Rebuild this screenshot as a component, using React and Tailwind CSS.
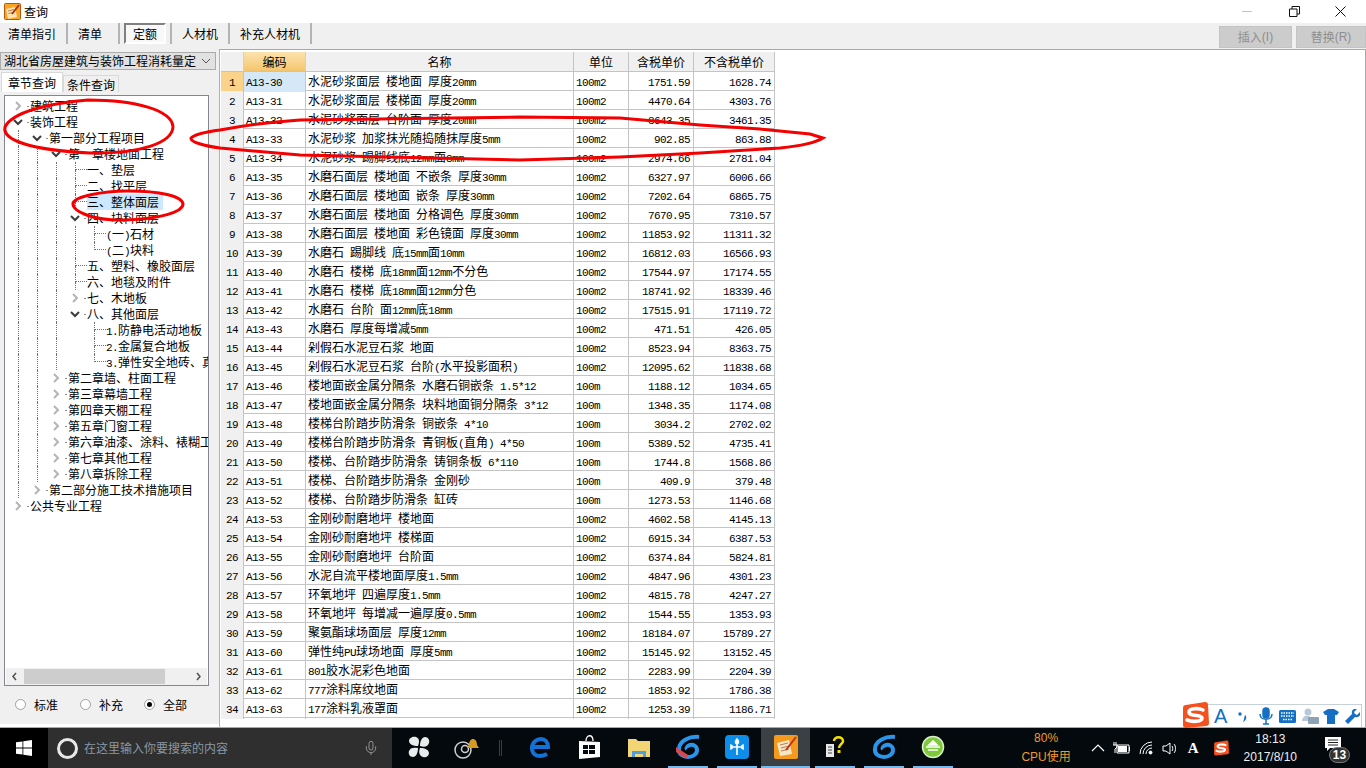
import React from 'react';
import { Mic } from 'lucide-react';

const cjk = "font-['Noto_Sans_CJK_SC',sans-serif]";

// SimSun-like text: latin runs are half the width of the CJK chars
const T = ({ children }) =>
  String(children)
    .split(/([\x20-\x7e]+)/)
    .filter(Boolean)
    .map((part, i) =>
      /^[\x20-\x7e]+$/.test(part) ? (
        <span key={i} className="font-['Liberation_Mono',monospace] text-[11px] tracking-[-0.6px] whitespace-pre">
          {part}
        </span>
      ) : (
        <span key={i}>{part}</span>
      )
    );

const rows = [
  ['A13-30', '水泥砂浆面层 楼地面 厚度20mm', '100m2', '1751.59', '1628.74'],
  ['A13-31', '水泥砂浆面层 楼梯面 厚度20mm', '100m2', '4470.64', '4303.76'],
  ['A13-32', '水泥砂浆面层 台阶面 厚度20mm', '100m2', '3643.35', '3461.35'],
  ['A13-33', '水泥砂浆 加浆抹光随捣随抹厚度5mm', '100m2', '902.85', '863.88'],
  ['A13-34', '水泥砂浆 踢脚线底12mm面8mm', '100m2', '2974.66', '2781.04'],
  ['A13-35', '水磨石面层 楼地面 不嵌条 厚度30mm', '100m2', '6327.97', '6006.66'],
  ['A13-36', '水磨石面层 楼地面 嵌条 厚度30mm', '100m2', '7202.64', '6865.75'],
  ['A13-37', '水磨石面层 楼地面 分格调色 厚度30mm', '100m2', '7670.95', '7310.57'],
  ['A13-38', '水磨石面层 楼地面 彩色镜面 厚度30mm', '100m2', '11853.92', '11311.32'],
  ['A13-39', '水磨石 踢脚线 底15mm面10mm', '100m2', '16812.03', '16566.93'],
  ['A13-40', '水磨石 楼梯 底18mm面12mm不分色', '100m2', '17544.97', '17174.55'],
  ['A13-41', '水磨石 楼梯 底18mm面12mm分色', '100m2', '18741.92', '18339.46'],
  ['A13-42', '水磨石 台阶 面12mm底18mm', '100m2', '17515.91', '17119.72'],
  ['A13-43', '水磨石 厚度每增减5mm', '100m2', '471.51', '426.05'],
  ['A13-44', '剁假石水泥豆石浆 地面', '100m2', '8523.94', '8363.75'],
  ['A13-45', '剁假石水泥豆石浆 台阶(水平投影面积)', '100m2', '12095.62', '11838.68'],
  ['A13-46', '楼地面嵌金属分隔条 水磨石铜嵌条 1.5*12', '100m', '1188.12', '1034.65'],
  ['A13-47', '楼地面嵌金属分隔条 块料地面铜分隔条 3*12', '100m', '1348.35', '1174.08'],
  ['A13-48', '楼梯台阶踏步防滑条 铜嵌条 4*10', '100m', '3034.2', '2702.02'],
  ['A13-49', '楼梯台阶踏步防滑条 青铜板(直角) 4*50', '100m', '5389.52', '4735.41'],
  ['A13-50', '楼梯、台阶踏步防滑条 铸铜条板 6*110', '100m', '1744.8', '1568.86'],
  ['A13-51', '楼梯、台阶踏步防滑条 金刚砂', '100m', '409.9', '379.48'],
  ['A13-52', '楼梯、台阶踏步防滑条 缸砖', '100m', '1273.53', '1146.68'],
  ['A13-53', '金刚砂耐磨地坪 楼地面', '100m2', '4602.58', '4145.13'],
  ['A13-54', '金刚砂耐磨地坪 楼梯面', '100m2', '6915.34', '6387.53'],
  ['A13-55', '金刚砂耐磨地坪 台阶面', '100m2', '6374.84', '5824.81'],
  ['A13-56', '水泥自流平楼地面厚度1.5mm', '100m2', '4847.96', '4301.23'],
  ['A13-57', '环氧地坪 四遍厚度1.5mm', '100m2', '4815.78', '4247.27'],
  ['A13-58', '环氧地坪 每增减一遍厚度0.5mm', '100m2', '1544.55', '1353.93'],
  ['A13-59', '聚氨酯球场面层 厚度12mm', '100m2', '18184.07', '15789.27'],
  ['A13-60', '弹性纯PU球场地面 厚度5mm', '100m2', '15145.92', '13152.45'],
  ['A13-61', '801胶水泥彩色地面', '100m2', '2283.99', '2204.39'],
  ['A13-62', '777涂料席纹地面', '100m2', '1853.92', '1786.38'],
  ['A13-63', '177涂料乳液罩面', '100m2', '1253.39', '1186.71'],
];

// [text, level, state, guides]
const tree = [
  ['建筑工程', 0, 'closed', []],
  ['装饰工程', 0, 'open', []],
  ['第一部分工程项目', 1, 'open', [0]],
  ['第一章楼地面工程', 2, 'open', [0, 1]],
  ['一、垫层', 3, 'leaf', [0, 1, 2]],
  ['二、找平层', 3, 'leaf', [0, 1, 2]],
  ['三、整体面层', 3, 'leaf', [0, 1, 2]],
  ['四、块料面层', 3, 'open', [0, 1, 2]],
  ['(一)石材', 4, 'leaf', [0, 1, 2, 3]],
  ['(二)块料', 4, 'last', [0, 1, 2, 3]],
  ['五、塑料、橡胶面层', 3, 'leaf', [0, 1, 2]],
  ['六、地毯及附件', 3, 'leaf', [0, 1, 2]],
  ['七、木地板', 3, 'closed', [0, 1, 2]],
  ['八、其他面层', 3, 'open', [0, 1, 2]],
  ['1.防静电活动地板', 4, 'leaf', [0, 1, 2]],
  ['2.金属复合地板', 4, 'leaf', [0, 1, 2]],
  ['3.弹性安全地砖、真空', 4, 'last', [0, 1, 2]],
  ['第二章墙、柱面工程', 2, 'closed', [0, 1]],
  ['第三章幕墙工程', 2, 'closed', [0, 1]],
  ['第四章天棚工程', 2, 'closed', [0, 1]],
  ['第五章门窗工程', 2, 'closed', [0, 1]],
  ['第六章油漆、涂料、裱糊工程', 2, 'closed', [0, 1]],
  ['第七章其他工程', 2, 'closed', [0, 1]],
  ['第八章拆除工程', 2, 'closed', [0, 1]],
  ['第二部分施工技术措施项目', 1, 'closed', [0]],
  ['公共专业工程', 0, 'closed', []],
];

const Chevron = ({ open }) => (
  <svg width="12" height="12" viewBox="0 0 12 12" className="shrink-0" fill="none">
    {open ? (
      <path d="M2 4l4 4 4-4" stroke="#3c3c3c" strokeWidth="2" />
    ) : (
      <path d="M4 2l4 4-4 4" stroke="#b4b4b4" strokeWidth="2" />
    )}
  </svg>
);

const TreeRow = ({ text, level, state, guides }) => (
  <div className="flex h-4 items-stretch whitespace-nowrap">
    {Array.from({ length: level }).map((_, i) => (
      <div key={i} className="ml-[6px] w-[13px] shrink-0">
        {guides.includes(i) && <div className="h-full w-px border-l border-dotted border-[#707070]" />}
      </div>
    ))}
    {state === 'open' || state === 'closed' ? (
      <div className="flex w-[18px] shrink-0 items-center justify-between">
        <Chevron open={state === 'open'} />
        <div className="mr-[1px] h-px w-[2px] bg-[#909090]" />
      </div>
    ) : (
      <div className="ml-[6px] w-[12px] shrink-0">
        <div className="h-2 border-b border-l border-dotted border-[#707070]" />
        {state === 'leaf' && <div className="h-2 border-l border-dotted border-[#707070]" />}
      </div>
    )}
    <span className={text === '三、整体面层' ? 'bg-[#cce8ff] pr-[4px] leading-4' : 'leading-4'}>
      <T>{text}</T>
    </span>
  </div>
);

const Radio = ({ label, checked }) => (
  <div className="flex items-center gap-[8px]">
    <div className="flex h-[11px] w-[11px] items-center justify-center rounded-full border border-[#a0a0a0] bg-white">
      {checked && <div className="h-[5px] w-[5px] rounded-full bg-black" />}
    </div>
    <span>{label}</span>
  </div>
);

const ToolSep = () => <div className="h-[21px] w-[2px] bg-[#b4b4b4]" />;

const LogoS = ({ size = 24 }) => (
  <svg width={size} height={size} viewBox="0 0 28 28" className="shrink-0">
    <path d="M5 4L24 1c2 0 3 1 3 3l1 18c0 2-1 3-3 3L5 27c-2 0-3-1-3-3L2 7c0-2 1-3 3-3z" fill="#f4511e" />
    <path d="M22 9c-4-2-14-2-14 2 0 5 13 2 13 6 0 4-10 4-15 2" fill="none" stroke="#fff" strokeWidth="3.6" strokeLinecap="round" />
  </svg>
);

const Swirl = ({ color = '#2b95ea', badge }) => (
  <svg width="26" height="26" viewBox="0 0 26 26" fill="none">
    <path d="M24 3C14 2 5 7 4 14c-1 6 4 9 9 9s9-3 9-7-4-6-7-5-4 3-3 4" stroke={color} strokeWidth="4" />
    {badge && <path d="M1 13l12 8-2 4L1 18z" fill="#d8484f" />}
  </svg>
);

const TaskIcon = ({ children, active, line = true }) => (
  <div className={`flex h-10 w-[49px] shrink-0 flex-col items-center ${active ? 'bg-[#3a4044]' : ''}`}>
    <div className="flex h-[38px] w-full items-center justify-center">{children}</div>
    {line && <div className={`h-[2px] ${active ? 'w-full' : 'w-[40px]'} bg-[#76b9ed]`} />}
  </div>
);

const App = () => (
  <div className={`relative flex h-[768px] w-[1366px] flex-col overflow-hidden bg-white text-[12px] text-black ${cjk}`}>
    {/* title bar */}
    <div className="flex h-[23px] shrink-0 items-center">
      <svg width="17" height="17" viewBox="0 0 17 17" className="ml-[4px]">
        <rect x="0.5" y="0.5" width="16" height="16" rx="1" fill="#f6a623" stroke="#b8560f" />
        <path d="M2 6l9-2 2 10-9 2z" fill="#fbe3b4" />
        <path d="M4 8l6-1.5M4.5 10.5l6-1.5" stroke="#b08050" />
        <path d="M8 11L15 2" stroke="#b02a10" strokeWidth="1.8" />
      </svg>
      <span className="ml-[3px]">查询</span>
      <div className="ml-auto flex items-center">
        <div className="mr-[37px] h-px w-[10px] bg-[#c4c4c4]" />
        <svg width="11" height="11" viewBox="0 0 11 11" fill="none" stroke="#111" className="mr-[35px]">
          <path d="M0.5 3h7.5v7.5H0.5zM3 3V0.5h7.5V8H8" />
        </svg>
        <svg width="11" height="11" viewBox="0 0 11 11" fill="none" stroke="#111" className="mr-[20px]">
          <path d="M0.5 0.5l10 10M10.5 0.5l-10 10" />
        </svg>
      </div>
    </div>

    {/* toolbar */}
    <div className="flex h-[26px] shrink-0 items-center bg-[#f0f0f0] pb-[5px]">
      <span className="ml-[8px] w-[58px]">清单指引</span>
      <ToolSep />
      <span className="ml-[10px] w-[40px]">清单</span>
      <ToolSep />
      <div className="ml-[4px] mr-[4px] flex h-[21px] w-[42px] items-center justify-center border-2 border-b-white border-r-white border-l-[#808080] border-t-[#808080] bg-[#f8f8f8]">
        定额
      </div>
      <ToolSep />
      <span className="ml-[10px] w-[46px]">人材机</span>
      <ToolSep />
      <span className="ml-[10px] w-[70px]">补充人材机</span>
      <ToolSep />
      <div className="mb-[-4px] ml-auto flex items-center gap-[4px] self-end text-[#8e8e8e]">
        <div className="flex h-[22px] w-[73px] items-center justify-center border border-[#c4c4c4] bg-[#cccccc]">
          插入<span className="font-['Liberation_Sans',sans-serif]">(I)</span>
        </div>
        <div className="flex h-[22px] w-[70px] items-center justify-center border border-[#c4c4c4] bg-[#cccccc]">
          替换<span className="font-['Liberation_Sans',sans-serif]">(R)</span>
        </div>
      </div>
    </div>

    {/* content */}
    <div className="flex min-h-0 flex-1 border-b border-[#a8a8a8]">
      <div className="flex w-[220px] shrink-0 flex-col border-r border-[#b0b0b0] pb-[3px]">
        <div className="flex flex-1 flex-col bg-[#f0f0f0]">
          <div className="mt-[3px] flex h-[18px] w-[216px] shrink-0 items-center justify-between border border-[#acacac] bg-[#e1e1e1] pl-[3px] pr-[4px] whitespace-nowrap">
            <span>湖北省房屋建筑与装饰工程消耗量定</span>
            <svg width="10" height="6" viewBox="0 0 10 6" fill="none" stroke="#555" strokeWidth="1">
              <path d="M1 1l4 4 4-4" />
            </svg>
          </div>
          <div className="mt-[2px] flex h-[20px] w-[213px] shrink-0 items-end">
            <div className="ml-[1px] flex h-[20px] w-[62px] items-center justify-center border border-b-0 border-[#d9d9d9] bg-white">章节查询</div>
            <div className="flex h-[17px] w-[56px] items-center justify-center border border-b-0 border-[#d9d9d9] bg-[#f0f0f0] pt-[2px]">条件查询</div>
          </div>
          <div className="flex w-[213px] flex-1 flex-col px-[4px] pt-[3px]">
            <div className="flex h-[591px] shrink-0 flex-col overflow-hidden border border-[#828790] bg-white pt-[2px]">
              <div className="flex-1 overflow-hidden pl-[7px]">
                {tree.map(([text, level, state, guides]) => (
                  <TreeRow key={text} text={text} level={level} state={state} guides={guides} />
                ))}
              </div>
              <div className="mx-px flex h-[17px] shrink-0 items-center bg-[#f0f0f0]">
                <svg width="18" height="17" viewBox="0 0 18 17" fill="none" stroke="#505050" strokeWidth="1.5" className="shrink-0">
                  <path d="M10 5L7 8.5l3 3.5" />
                </svg>
                <div className="h-[15px] w-[141px] bg-[#cdcdcd]" />
                <svg width="18" height="17" viewBox="0 0 18 17" fill="none" stroke="#505050" strokeWidth="1.5" className="ml-auto shrink-0">
                  <path d="M8 5l3 3.5L8 12" />
                </svg>
              </div>
            </div>
            <div className="flex flex-1 items-center pb-[1px] pl-[11px]">
              <div className="w-[65px]"><Radio label="标准" /></div>
              <div className="w-[64px]"><Radio label="补充" /></div>
              <Radio label="全部" checked />
            </div>
          </div>
        </div>
      </div>

      <div className="min-w-0 flex-1 border-r border-t border-[#a8a8b0] pl-[1px] pt-[2px]">
        <div className="w-[554px]">
          <div className="grid h-[20px] grid-cols-[23px_62px_268px_55px_65px_81px] border-b border-[#c4c4c4] bg-[#f0f0f0] text-center leading-[19px]">
            <div className="border-r border-[#d0d0d0]" />
            <div className="border-r border-[#d0d0d0] bg-gradient-to-b from-[#fbe3ad] to-[#f5c56c]">编码</div>
            <div className="border-r border-[#c4c4c4]">名称</div>
            <div className="border-r border-[#c4c4c4]">单位</div>
            <div className="border-r border-[#c4c4c4]">含税单价</div>
            <div className="border-r border-[#c4c4c4]">不含税单价</div>
          </div>
          {rows.map((r, i) => (
            <div key={r[0]} className="grid h-[19px] grid-cols-[23px_62px_268px_55px_65px_81px] border-b border-[#c4c4c4] leading-[18px] whitespace-nowrap">
              <div className={`border-r border-[#c4c4c4] text-center ${i === 0 ? 'bg-[#fad28a]' : 'bg-[#f0f0f0]'}`}><T>{i + 1}</T></div>
              <div className={`border-r border-[#c4c4c4] pl-[2px] ${i === 0 ? 'bg-[#d5e8f8]' : ''}`}><T>{r[0]}</T></div>
              <div className="overflow-hidden border-r border-[#c4c4c4] pl-[2px]"><T>{r[1]}</T></div>
              <div className="border-r border-[#c4c4c4] pl-[2px]"><T>{r[2]}</T></div>
              <div className="border-r border-[#c4c4c4] pr-[3px] text-right"><T>{r[3]}</T></div>
              <div className="border-r border-[#c4c4c4] pr-[3px] text-right"><T>{r[4]}</T></div>
            </div>
          ))}
        </div>
      </div>
    </div>

    {/* taskbar */}
    <div className="flex h-10 shrink-0 items-center bg-[#04090d] text-white">
      <div className="flex h-10 w-[48px] shrink-0 items-center justify-center bg-black">
        <svg width="16" height="16" viewBox="0 0 16 16" fill="#fff">
          <path d="M0 2.3l6.5-.9v6.2H0zM7.3 1.3L16 0v7.6H7.3zM0 8.4h6.5v6.2L0 13.7zM7.3 8.4H16V16l-8.7-1.2z" />
        </svg>
      </div>
      <div className="flex h-10 w-[344px] shrink-0 items-center bg-[#2f2f2f] pl-[9px] pr-[13px]">
        <div className="h-[21px] w-[21px] rounded-full border-[3px] border-[#e8e8e8]" />
        <span className="ml-[6px] text-[#8a98a4]">在这里输入你要搜索的内容</span>
        <Mic size={16} strokeWidth={1.3} className="ml-auto text-[#a0a0a0]" />
      </div>
      <div className="flex h-10 items-center pl-[2px]">
        <TaskIcon line={false}>
          <svg width="22" height="22" viewBox="0 0 22 22" fill="#e8ecec">
            <path d="M10 10C5 10 1 8 1 5s4-5 7-4 4 4 2 9zM12 10c0-5 2-9 5-9s5 3 4 6-4 5-9 3zM12 12c5 0 9 2 9 5s-3 5-6 4-5-4-3-9zM10 12c0 5-2 9-5 9s-5-3-4-6 4-4 9-3z" />
          </svg>
        </TaskIcon>
        <TaskIcon line={false}>
          <svg width="32" height="26" viewBox="0 0 32 26" fill="none">
            <circle cx="11" cy="16" r="8" stroke="#cfcfcf" strokeWidth="1.5" />
            <circle cx="13" cy="15" r="3.5" stroke="#cfcfcf" strokeWidth="1.5" />
            <path d="M17 11c0-4 2-6 4-6s4 2 4 6l2 3H15z" fill="#d69a1f" />
          </svg>
        </TaskIcon>
        <div className="ml-[7px] mr-[14px] h-4 w-[3px] border-x border-[#3c3c3c]" />
        <TaskIcon line={false}>
          <svg width="21" height="22" viewBox="0 0 21 22" fill="none">
            <path d="M3 11h15c0-5-3-8-7-8s-9 3-9 9 4 8 8 8c3 0 5-1 7-2" stroke="#1272d8" strokeWidth="4" />
          </svg>
        </TaskIcon>
        <TaskIcon line={false}>
          <svg width="21" height="24" viewBox="0 0 21 24">
            <path d="M0 6l21 1v15L0 24z" fill="#fff" />
            <path d="M7 6c0-7 7-7 7 0" fill="none" stroke="#fff" strokeWidth="1.3" />
            <path d="M4 10h5v4H4zM10 10h6v4h-6zM4 15h5v4H4zM10 15h6v4h-6z" fill="#04090d" />
          </svg>
        </TaskIcon>
        <TaskIcon line={false}>
          <svg width="22" height="20" viewBox="0 0 22 20">
            <path d="M0 2h8l2 2h12v16H0z" fill="#f2d675" />
            <path d="M4 14h14v6h-3v-3H7v3H4z" fill="#4f9fe0" />
          </svg>
        </TaskIcon>
        <TaskIcon><Swirl badge /></TaskIcon>
        <TaskIcon>
          <svg width="24" height="24" viewBox="0 0 24 24" fill="none">
            <rect width="24" height="24" rx="4" fill="#0c8ee8" />
            <path d="M12 4v16M5 12h14M12 4c-2 2-2 4 0 5 2-1 2-3 0-5zM5 10c3 0 3 4 0 4M19 10c-3 0-3 4 0 4" stroke="#fff" strokeWidth="1.6" />
          </svg>
        </TaskIcon>
        <TaskIcon active>
          <svg width="24" height="24" viewBox="0 0 24 24">
            <rect width="24" height="24" rx="2" fill="#f59a1c" />
            <path d="M3 8l12-3 3 14-12 2z" fill="#f5e6c8" />
            <path d="M6 10l8-2M7 13l8-2M7 16l8-2" stroke="#b08050" />
            <path d="M12 15L22 2" stroke="#c4301a" strokeWidth="2" />
          </svg>
        </TaskIcon>
        <TaskIcon>
          <svg width="20" height="22" viewBox="0 0 20 22">
            <path d="M1 8h8v13H1z" fill="#e8e8e8" />
            <path d="M3 11h4M3 14h4M3 17h4" stroke="#444" />
            <path d="M9 5c0-5 9-5 9 0 0 3-4 3-4 7" fill="none" stroke="#f5e000" strokeWidth="2.5" />
            <rect x="12.5" y="14" width="3" height="3" fill="#f5e000" />
          </svg>
        </TaskIcon>
        <TaskIcon><Swirl /></TaskIcon>
        <TaskIcon>
          <svg width="24" height="24" viewBox="0 0 24 24">
            <circle cx="12" cy="12" r="10.5" fill="#7ec83c" stroke="#d8efc8" strokeWidth="1.5" />
            <path d="M5 12h14M12 6l-4 4h8zM7 15h10" stroke="#fff" strokeWidth="1.6" fill="#fff" />
          </svg>
        </TaskIcon>
      </div>
      <div className="ml-auto flex h-10 items-center">
        <div className="mr-[20px] flex flex-col items-center leading-[17px] text-[#ef9a26]">
          <span className="font-['Liberation_Sans',sans-serif]">80%</span>
          <span><span className="font-['Liberation_Sans',sans-serif]">CPU</span>使用</span>
        </div>
        <svg width="14" height="8" viewBox="0 0 14 8" fill="none" stroke="#fff" strokeWidth="1.2" className="mr-[7px]">
          <path d="M1 7l6-6 6 6" />
        </svg>
        <svg width="18" height="12" viewBox="0 0 18 12" className="mr-[9px]">
          <path d="M5 3h12v8H5z" fill="none" stroke="#fff" />
          <path d="M6 4h9v6H6zM17 5h1v4h-1z" fill="#fff" />
          <path d="M2 0v3M4 0v3M1 3h4v2L3 7v4" fill="none" stroke="#fff" />
        </svg>
        <svg width="14" height="14" viewBox="0 0 14 14" fill="none" stroke="#fff" className="mr-[9px]">
          <path d="M1 13A12 12 0 0 1 13 1M4 13a9 9 0 0 1 9-9" />
          <path d="M7 13a6 6 0 0 1 6-6" />
          <circle cx="11.5" cy="11.5" r="1.5" fill="#fff" />
        </svg>
        <svg width="15" height="13" viewBox="0 0 15 13" fill="none" stroke="#fff" className="mr-[11px]">
          <path d="M1 4h3l4-3v11l-4-3H1zM10 4c1 1 1 4 0 5M12 2c2 2 2 7 0 9" />
        </svg>
        <span className="mr-[14px] font-['Liberation_Serif',serif] text-[15px] font-bold">A</span>
        <div className="mr-[15px]"><LogoS size={16} /></div>
        <div className="mr-[23px] flex flex-col items-center leading-[18px] font-['Liberation_Sans',sans-serif] text-[#f0f0f0]">
          <span>18:13</span>
          <span>2017/8/10</span>
        </div>
        <div className="relative mr-[22px] flex h-10 w-[24px] items-center">
          <svg width="16" height="14" viewBox="0 0 16 14" className="mb-[8px] ml-[5px]">
            <path d="M0 0h16v11H5l-3 3v-3H0z" fill="#fff" />
            <path d="M3 3h10M3 5.5h10M3 8h10" stroke="#222" />
          </svg>
          <div className="absolute left-[9px] top-[19px] flex h-[16px] w-[21px] items-center justify-center rounded-full border border-[#777] bg-[#333] text-[12px] font-bold font-['Liberation_Sans',sans-serif]">13</div>
        </div>
      </div>
    </div>

    {/* floating IME bar */}
    <div className="absolute bottom-[41px] right-[4px] flex h-[23px] w-[172px] items-center border-r border-t border-[#c8d0d8] bg-white pl-[24px] text-[#1570c4]">
      <span className="w-[22px] font-['Liberation_Sans',sans-serif] text-[20px] leading-none">A</span>
      <svg width="16" height="16" viewBox="0 0 16 16" fill="#1570c4" className="mr-[6px]">
        <circle cx="4" cy="6" r="1.7" />
        <path d="M9 7c2 1 2 5-2 7 1-2 1-4 2-7z" />
      </svg>
      <svg width="16" height="18" viewBox="0 0 16 18" fill="none" stroke="#1570c4" strokeWidth="1.5" className="mr-[5px]">
        <rect x="5" y="1" width="6" height="10" rx="3" fill="#1570c4" />
        <path d="M2 7c0 7 12 7 12 0M8 13v4M5 17h6" />
      </svg>
      <svg width="17" height="13" viewBox="0 0 17 13" className="mr-[5px]">
        <rect width="17" height="13" rx="1.5" fill="#1570c4" />
        <path d="M2 3h13M2 6h13M4 9.5h9" stroke="#fff" strokeWidth="1.3" strokeDasharray="1.5 1" />
      </svg>
      <svg width="18" height="16" viewBox="0 0 18 16" fill="#b8c8d8" className="mr-[4px]">
        <circle cx="7" cy="4" r="3.5" />
        <path d="M1 13c0-7 10-7 10 0z" />
        <rect x="7" y="9" width="11" height="7" rx="1" fill="#8ea2b6" />
      </svg>
      <svg width="16" height="15" viewBox="0 0 16 15" fill="#1570c4" className="mr-[6px]">
        <path d="M5 0h6l5 3-2 3h-2v9H4V6H2L0 3z" />
      </svg>
      <svg width="15" height="15" viewBox="0 0 15 15" fill="#1570c4">
        <path d="M15 3l-3 3-2-1-1-2 3-3c-3-1-6 1-5 5L0 12l3 3 7-7c4 1 6-2 5-5z" />
      </svg>
    </div>
    <div className="absolute left-[1181px] top-[701px]"><LogoS size={28} /></div>

    {/* hand drawn marks */}
    <svg width="1366" height="768" className="pointer-events-none absolute left-0 top-0" fill="none" stroke="#f40000" strokeWidth="3">
      <path d="M88 100C50 103 12 112 5 127 2 140 30 150 90 153 140 154 172 143 173 127 172 110 135 100 88 100z" />
      <path d="M128 191C100 191 75 197 73 203 72 212 95 221 125 220 160 219 183 212 183 204 182 196 160 191 128 191z" />
      <path d="M220 130C240 126 270 122 300 120L520 117 620 118 700 125 760 129 810 134 823 138C815 143 800 146 780 148L700 153 620 157 520 160 300 155 220 148C205 146 190 142 191 138 195 134 205 132 220 130z" />
    </svg>
  </div>
);

export default App;
